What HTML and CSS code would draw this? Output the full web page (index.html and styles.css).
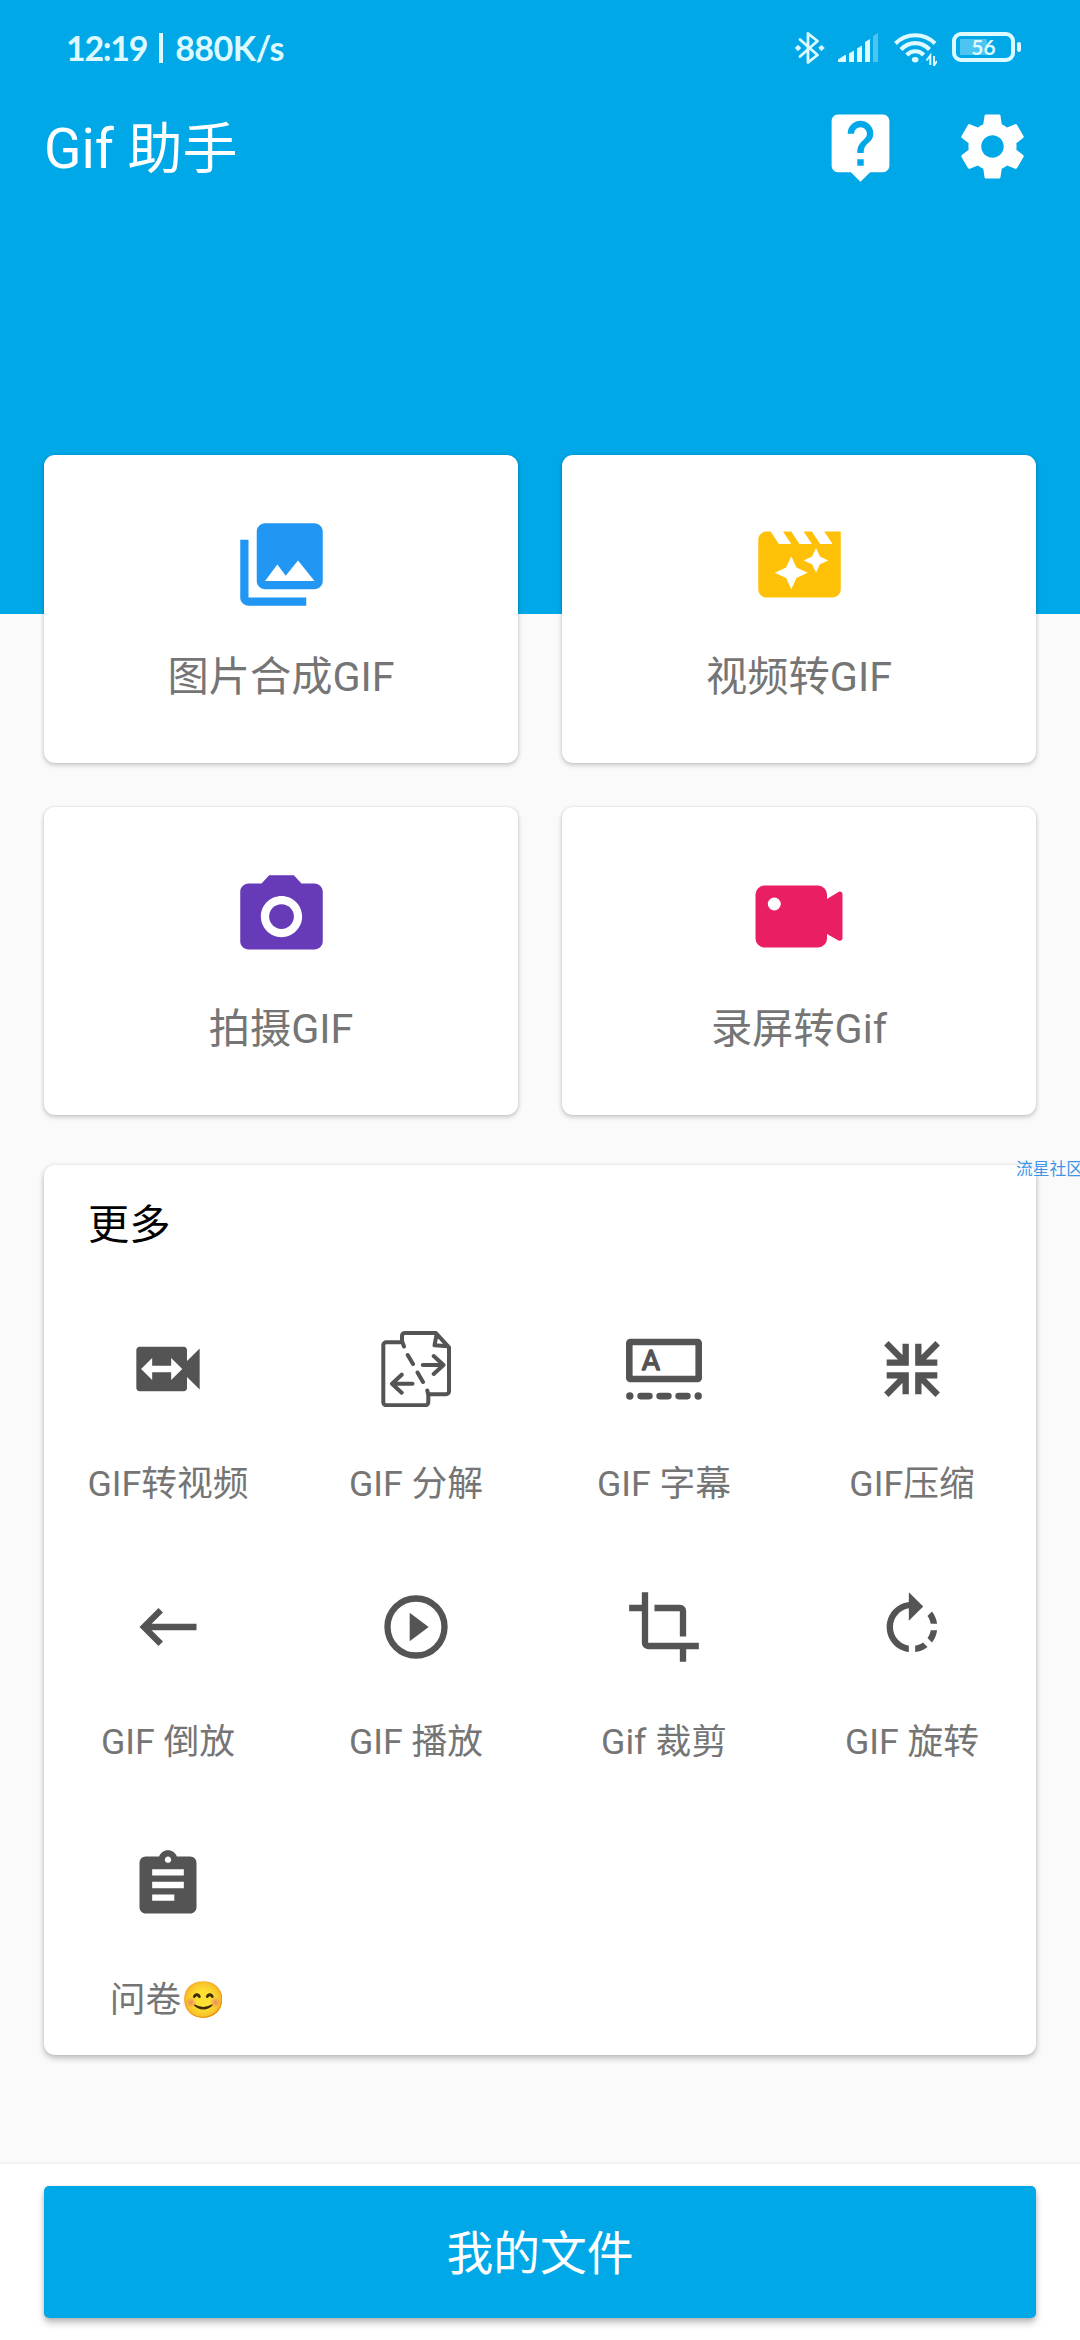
FILE: index.html
```html
<!DOCTYPE html>
<html lang="zh-CN">
<head>
<meta charset="utf-8">
<title>Gif 助手</title>
<link rel="stylesheet" href="styles.css">
</head>
<body>
<div class="screen">
  <header class="header">
    <div class="status">
      <div class="status-text"><span class="clock">12:19</span><span class="bar"></span><span class="speed">880K/s</span></div>
      <div class="status-icons">
        <svg class="bt" width="30" height="34" viewBox="0 0 30 34"><path d="M5 8.500L22.500 24 13 31.500V2.500l9.500 7.500L5 25.500" fill="none" stroke="currentColor" stroke-width="2.800" stroke-linejoin="round" stroke-linecap="round"/><path d="M3 14.200l2.800 2.800L3 19.800.2 17zM26.500 14.200l2.800 2.800-2.800 2.800-2.800-2.800z" fill="currentColor" stroke="currentColor" stroke-width=".8"/></svg>
        <svg class="signal" width="41" height="30" viewBox="0 0 41 30" fill="currentColor"><path d="M0 29v-2.500l7-4.500h1v7zM11 20.500l5-3V29h-5zM19 15.500l5-3V29h-5zM27 9l5-3v23h-5z"/><path d="M35 3l5-3v29h-5z" opacity=".35"/></svg>
        <svg class="wifi" width="43" height="34" viewBox="0 0 43 34"><g fill="none" stroke="currentColor" stroke-width="4.200"><path d="M1.500 11.500C12 .5 30.500.5 41 11.500"/><path d="M7 17.500c8-8.500 20.500-8.500 28.500 0"/><path d="M12.800 23c4.700-5 12.200-5 16.900 0"/></g><path d="M21.200 30.500c-4 0-5-5.500 0-5.500s4 5.500 0 5.500z" fill="currentColor"/><path d="M36.300 33v-9.500l-3.800 5M40 24v9.500l3-4.500" fill="none" stroke="currentColor" stroke-width="2"/></svg>
        <div class="battery"><div class="cell"><span>56</span></div><i></i></div>
      </div>
    </div>
    <div class="toolbar">
      <h1>Gif 助手</h1>
      <div class="actions">
        <svg width="77" height="77" viewBox="0 0 24 24" fill="currentColor"><path d="M19 2H5c-1.110 0-2 .9-2 2v14c0 1.100.89 2 2 2h4l3 3 3-3h4c1.100 0 2-.9 2-2V4c0-1.100-.9-2-2-2zm-6 16h-2v-2h2v2zm2.070-7.750l-.9.92C13.450 11.900 13 12.500 13 14h-2v-.5c0-1.100.45-2.100 1.170-2.830l1.240-1.260c.37-.36.59-.86.59-1.410 0-1.100-.9-2-2-2s-2 .9-2 2H8c0-2.210 1.790-4 4-4s4 1.790 4 4c0 .88-.36 1.680-.93 2.250z"/></svg>
        <svg width="77" height="77" viewBox="0 0 24 24" fill="currentColor"><path d="M19.430 12.980c.04-.32.07-.64.07-.98s-.03-.66-.07-.98l2.110-1.650c.19-.15.24-.42.12-.64l-2-3.460c-.12-.22-.39-.3-.61-.22l-2.490 1c-.52-.4-1.080-.73-1.690-.98l-.38-2.650C14.460 2.180 14.250 2 14 2h-4c-.25 0-.46.18-.49.42l-.38 2.650c-.61.25-1.170.59-1.690.98l-2.490-1c-.23-.09-.49 0-.61.22l-2 3.460c-.13.22-.07.49.12.64l2.110 1.650c-.04.32-.07.65-.07.98s.03.66.07.98l-2.110 1.650c-.19.15-.24.42-.12.64l2 3.460c.12.22.39.3.61.22l2.490-1c.52.4 1.080.73 1.690.98l.38 2.650c.03.24.24.42.49.42h4c.25 0 .46-.18.49-.42l.38-2.650c.61-.25 1.170-.59 1.690-.98l2.490 1c.23.09.49 0 .61-.22l2-3.460c.12-.22.07-.49-.12-.64l-2.110-1.650zM12 15.500c-1.930 0-3.500-1.570-3.500-3.500s1.570-3.500 3.500-3.500 3.500 1.570 3.500 3.500-1.570 3.500-3.500 3.500z"/></svg>
      </div>
    </div>
  </header>

  <main class="content">
    <div class="cards">
      <div class="card">
        <svg class="blue" width="99" height="99" viewBox="0 0 24 24"><path d="M22 16V4c0-1.100-.9-2-2-2H8c-1.100 0-2 .9-2 2v12c0 1.100.9 2 2 2h12c1.100 0 2-.9 2-2zm-11-4l2.030 2.710L16 11l4 5H8l3-4zM2 6v14c0 1.100.9 2 2 2h14v-2H4V6H2z"/></svg>
        <p>图片合成GIF</p>
      </div>
      <div class="card">
        <svg class="amber" width="99" height="99" viewBox="0 0 24 24"><path d="M18 4l2 3h-3l-2-3h-2l2 3h-3l-2-3H8l2 3H7L5 4H4c-1.100 0-1.990.9-1.990 2L2 18c0 1.100.9 2 2 2h16c1.100 0 2-.9 2-2V4h-4zm-6.750 11.250L10 18l-1.250-2.750L6 14l2.750-1.250L10 10l1.250 2.750L14 14l-2.750 1.250zm5.690-3.310L16 14l-.94-2.060L13 11l2.060-.94L16 8l.94 2.060L19 11l-2.060.94z"/></svg>
        <p>视频转GIF</p>
      </div>
      <div class="card">
        <svg class="purple" width="99" height="99" viewBox="0 0 24 24"><circle cx="12" cy="12" r="3"/><path d="M9 2L7.170 4H4c-1.100 0-2 .9-2 2v12c0 1.100.9 2 2 2h16c1.100 0 2-.9 2-2V6c0-1.100-.9-2-2-2h-3.170L15 2H9zm3 15c-2.760 0-5-2.240-5-5s2.240-5 5-5 5 2.240 5 5-2.240 5-5 5z"/></svg>
        <p>拍摄GIF</p>
      </div>
      <div class="card">
        <svg class="pink" width="99" height="99" viewBox="0 0 99 99"><path fill-rule="evenodd" d="M14.500 18.500H68a9 9 0 0 1 9 9V32l11-6.800c2-1.300 4.500-.4 4.500 2V71c0 2.500-2.500 3.500-4.500 2.200L77 67v4.500a9 9 0 0 1-9 9H14.500a9 9 0 0 1-9-9v-44a9 9 0 0 1 9-9zM24.300 30.500a6.500 6.500 0 1 0 0 13 6.500 6.500 0 0 0 0-13z"/></svg>
        <p>录屏转Gif</p>
      </div>
    </div>

    <section class="more">
      <h2>更多</h2>
      <div class="grid">
        <div class="item">
          <svg width="76" height="76" viewBox="0 0 24 24"><path d="M18 9.500V6c0-.55-.45-1-1-1H3c-.55 0-1 .45-1 1v12c0 .55.45 1 1 1h14c.55 0 1-.45 1-1v-3.500l4 4v-13l-4 4zm-5 6V13H7v2.500L3.500 12 7 8.500V11h6V8.500l3.500 3.500-3.500 3.500z"/></svg>
          <p>GIF转视频</p>
        </div>
        <div class="item">
          <svg class="line" width="76" height="76" viewBox="0 0 76 76"><path d="M26 15.500L24.500 11.300H8.300a3 3 0 0 0-3 3v57a3 3 0 0 0 3 3h39a3 3 0 0 0 3-3V63.300h17.700a3 3 0 0 0 3-3V16.300L57.700 1.900H27a3 3 0 0 0-3 3v6.400M50.300 64l-1-4.500M58.700 3l-2.200 11.300L70 15.300M29.700 24l5.300 9M39.500 41.500l5.500 9.500M44.800 34h20M55.700 25l9.800 9-9.800 9M34.500 52.700H15M23.700 43.700l-9.700 9 9.700 9" stroke-width="4"/></svg>
          <p>GIF 分解</p>
        </div>
        <div class="item">
          <svg width="76" height="76" viewBox="0 0 76 76"><rect x="3.300" y="11" width="69.400" height="37" rx="1" fill="none" stroke="currentColor" stroke-width="6.600" stroke-linejoin="round"/><text class="glyph" x="25" y="39" text-anchor="middle">A</text><g><circle cx="3.800" cy="65" r="3.700"/><rect x="11.300" y="61.700" width="15.400" height="6.700" rx="3.300"/><rect x="30.300" y="61.700" width="15.400" height="6.700" rx="3.300"/><rect x="49.300" y="61.700" width="15.400" height="6.700" rx="3.300"/><circle cx="72.200" cy="65" r="3.700"/></g></svg>
          <p>GIF 字幕</p>
        </div>
        <div class="item">
          <svg width="76" height="76" viewBox="0 0 24 24"><path d="M10 4v6H4M3.900 3.900L10 10M14 4v6h6M20.100 3.900L14 10M10 20v-6H4M3.900 20.100L10 14M14 20v-6h6M20.100 20.100L14 14" fill="none" stroke="currentColor" stroke-width="2"/></svg>
          <p>GIF压缩</p>
        </div>
        <div class="item">
          <svg width="76" height="76" viewBox="0 0 24 24"><path d="M21 11H6.830l3.580-3.590L9 6l-6 6 6 6 1.410-1.410L6.830 13H21z"/></svg>
          <p>GIF 倒放</p>
        </div>
        <div class="item">
          <svg width="76" height="76" viewBox="0 0 24 24"><path d="M10 16.500l6-4.500-6-4.500v9z"/><circle cx="12" cy="12" r="9" fill="none" stroke="currentColor" stroke-width="2"/></svg>
          <p>GIF 播放</p>
        </div>
        <div class="item">
          <svg width="76" height="76" viewBox="0 0 24 24"><path d="M17 15h2V7c0-1.100-.9-2-2-2H9v2h8v8zM7 17V1H5v4H1v2h4v10c0 1.100.9 2 2 2h10v4h2v-4h4v-2H7z"/></svg>
          <p>Gif 裁剪</p>
        </div>
        <div class="item">
          <svg width="76" height="76" viewBox="0 0 24 24"><path d="M15.550 5.550L11 1v3.070C7.060 4.560 4 7.920 4 12s3.050 7.440 7 7.930v-2.020c-2.840-.48-5-2.940-5-5.910s2.160-5.430 5-5.910V10l4.550-4.450zM19.930 11c-.17-1.390-.72-2.730-1.620-3.890l-1.420 1.420c.54.75.88 1.600 1.020 2.470h2.020zM13 17.900v2.020c1.390-.17 2.740-.71 3.900-1.610l-1.440-1.440c-.75.54-1.590.89-2.460 1.030zm3.890-2.420l1.420 1.410c.9-1.160 1.450-2.500 1.620-3.890h-2.020c-.14.87-.48 1.720-1.020 2.480z"/></svg>
          <p>GIF 旋转</p>
        </div>
        <div class="item">
          <svg width="76" height="76" viewBox="0 0 24 24"><path d="M19 3h-4.180C14.400 1.840 13.300 1 12 1c-1.300 0-2.400.84-2.820 2H5c-1.100 0-2 .9-2 2v14c0 1.100.9 2 2 2h14c1.100 0 2-.9 2-2V5c0-1.100-.9-2-2-2zm-7 0c.55 0 1 .45 1 1s-.45 1-1 1-1-.45-1-1 .45-1 1-1zm2 14H7v-2h7v2zm3-4H7v-2h10v2zm0-4H7V7h10v2z"/></svg>
          <p>问卷😊</p>
        </div>
      </div>
    </section>
  </main>

  <footer class="footer"><button class="files">我的文件</button></footer>
  <span class="watermark">流星社区</span>
</div>
</body>
</html>
```

FILE: styles.css
```css
* { box-sizing: border-box; margin: 0; padding: 0; }
body { background: #fafafa; }
.screen {
  position: relative;
  display: flex;
  flex-direction: column;
  width: 1080px;
  height: 2340px;
  overflow: hidden;
  font-family: Roboto, "Noto Sans CJK SC", sans-serif;
}
svg { display: block; flex: none; }

.header { flex: none; height: 614px; background: #00a8e8; color: #fff; }
.status {
  display: flex;
  justify-content: space-between;
  height: 96px;
  padding: 0 59px 0 66px;
  color: #dcfaff;
}
.status-text {
  display: flex;
  align-items: center;
  height: 95px;
  font: 700 34px/95px Lato, sans-serif;
}
.clock { letter-spacing: -1.3px; }
.speed { letter-spacing: -.5px; }
.bar { width: 4px; height: 30px; margin: 0 12px; background: currentColor; }
.status-icons { display: flex; align-items: center; }
.signal { margin-left: 13px; margin-top: -1px; }
.wifi { margin-left: 15px; margin-top: 2px; }
.battery { display: flex; align-items: center; gap: 2px; margin-left: 15px; margin-top: -2px; }
.cell {
  width: 63px;
  height: 30px;
  border: 4px solid currentColor;
  border-radius: 9px;
  background: linear-gradient(90deg, rgba(220,250,255,.35) 58%, transparent 58%) 4px 3px / 47px 16px no-repeat;
  font: 700 21px/22px Lato, sans-serif;
  text-align: center;
}
.battery i { width: 4px; height: 10px; border-radius: 2px; background: currentColor; }

.toolbar {
  display: flex;
  align-items: center;
  justify-content: space-between;
  height: 101px;
  padding: 0 49px 0 44px;
}
.toolbar h1 { padding-top: 4px; font-size: 55px; font-weight: 400; line-height: 80px; }
.actions { display: flex; gap: 55px; }

.content { flex: 1; margin-top: -159px; padding: 0 44px; }
.cards { display: grid; grid-template-columns: 474px 474px; gap: 44px; }
.card, .more {
  background: #fff;
  border-radius: 11px;
  box-shadow: 0 2px 5px rgba(0,0,0,.22), 0 0 3px rgba(0,0,0,.08);
}
.card {
  display: flex;
  flex-direction: column;
  align-items: center;
  height: 308px;
  padding-top: 60px;
  color: #757575;
}
.card p { margin-top: 32px; font-size: 41.25px; line-height: 62px; }
.blue { fill: #2196f3; }
.amber { fill: #ffc107; }
.purple { fill: #673ab7; }
.pink { fill: #e91e63; }

.more { height: 890px; margin-top: 50px; padding-top: 29px; box-shadow: 0 3px 6px rgba(0,0,0,.26), 0 0 3px rgba(0,0,0,.08); }
.more h2 { padding-left: 44px; font-size: 41.25px; font-weight: 400; line-height: 62px; color: #000; }
.grid { display: grid; grid-template-columns: repeat(4, 248px); grid-auto-rows: 258px; margin-top: 75px; }
.item { display: flex; flex-direction: column; align-items: center; color: #545454; }
.item svg { fill: currentColor; }
.item .line { fill: none; stroke: currentColor; stroke-linecap: round; stroke-linejoin: round; }
.item p { margin-top: 50px; font-size: 35.75px; line-height: 54px; color: #757575; white-space: nowrap; }
.glyph { font: 400 28px Roboto, sans-serif; stroke: currentColor; stroke-width: 1.5px; stroke-linejoin: round; }

.footer {
  flex: none;
  height: 176px;
  padding: 22px 44px;
  background: #fff;
  box-shadow: 0 -1px 2px rgba(0,0,0,.06);
}
.files {
  display: block;
  width: 992px;
  height: 132px;
  padding-bottom: 5px;
  border: 0;
  border-radius: 5px;
  background: #00a8e8;
  box-shadow: 0 5px 7px rgba(0,0,0,.24), 0 1px 4px rgba(0,0,0,.12);
  color: #fff;
  font: 400 46.75px Roboto, "Noto Sans CJK SC", sans-serif;
}
.watermark {
  position: absolute;
  top: 1156px;
  left: 1016px;
  font: 400 16.800px/25px "Noto Sans CJK SC", sans-serif;
  color: #3f96e8;
  white-space: nowrap;
}
```
